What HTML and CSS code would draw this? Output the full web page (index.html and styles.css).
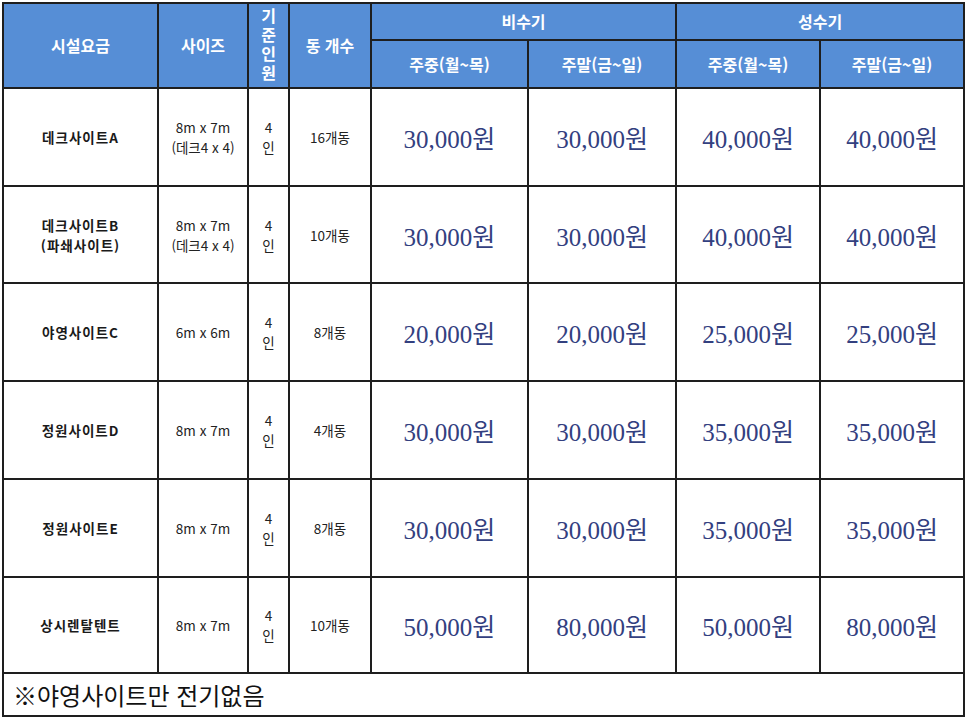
FILE: index.html
```html
<!DOCTYPE html>
<html lang="ko">
<head>
<meta charset="utf-8">
<link rel="stylesheet" href="styles.css">
</head>
<body>
<div class="wrap">
<table class="price">
  <colgroup>
    <col class="c-name"><col class="c-size"><col class="c-ppl"><col class="c-cnt">
    <col class="c-p1"><col class="c-p2"><col class="c-p3"><col class="c-p4">
  </colgroup>
  <thead>
    <tr class="h1">
      <th rowspan="2">시설요금</th>
      <th rowspan="2">사이즈</th>
      <th rowspan="2" class="vert"><span class="vtext">기준인원</span></th>
      <th rowspan="2">동 개수</th>
      <th colspan="2">비수기</th>
      <th colspan="2">성수기</th>
    </tr>
    <tr class="h2">
      <th>주중(월~목)</th>
      <th>주말(금~일)</th>
      <th>주중(월~목)</th>
      <th>주말(금~일)</th>
    </tr>
  </thead>
  <tbody>
    <tr class="r1">
      <td class="name">데크사이트A</td>
      <td class="info">8m x 7m<br>(데크4 x 4)</td>
      <td class="info">4<br>인</td>
      <td class="info">16개동</td>
      <td class="won">30,000원</td><td class="won">30,000원</td><td class="won">40,000원</td><td class="won">40,000원</td>
    </tr>
    <tr class="r2">
      <td class="name">데크사이트B<br>(파쇄사이트)</td>
      <td class="info">8m x 7m<br>(데크4 x 4)</td>
      <td class="info">4<br>인</td>
      <td class="info">10개동</td>
      <td class="won">30,000원</td><td class="won">30,000원</td><td class="won">40,000원</td><td class="won">40,000원</td>
    </tr>
    <tr class="r3">
      <td class="name">야영사이트C</td>
      <td class="info">6m x 6m</td>
      <td class="info">4<br>인</td>
      <td class="info">8개동</td>
      <td class="won">20,000원</td><td class="won">20,000원</td><td class="won">25,000원</td><td class="won">25,000원</td>
    </tr>
    <tr class="r4">
      <td class="name">정원사이트D</td>
      <td class="info">8m x 7m</td>
      <td class="info">4<br>인</td>
      <td class="info">4개동</td>
      <td class="won">30,000원</td><td class="won">30,000원</td><td class="won">35,000원</td><td class="won">35,000원</td>
    </tr>
    <tr class="r5">
      <td class="name">정원사이트E</td>
      <td class="info">8m x 7m</td>
      <td class="info">4<br>인</td>
      <td class="info">8개동</td>
      <td class="won">30,000원</td><td class="won">30,000원</td><td class="won">35,000원</td><td class="won">35,000원</td>
    </tr>
    <tr class="r6">
      <td class="name">상시렌탈텐트</td>
      <td class="info">8m x 7m</td>
      <td class="info">4<br>인</td>
      <td class="info">10개동</td>
      <td class="won">50,000원</td><td class="won">80,000원</td><td class="won">50,000원</td><td class="won">80,000원</td>
    </tr>
    <tr class="note">
      <td colspan="8">※야영사이트만 전기없음</td>
    </tr>
  </tbody>
</table>
</div>
</body>
</html>
```

FILE: styles.css
```css
html, body {
  margin: 0;
  padding: 0;
  background: #ffffff;
}
body {
  font-family: "Noto Sans CJK KR", "Noto Sans", sans-serif;
  color: #1a1a1a;
}
.wrap {
  padding: 2px 0 0 2px;
}
.price {
  border-collapse: collapse;
  table-layout: fixed;
  width: 961px;
}
.c-name { width: 155px; }
.c-size { width: 90px; }
.c-ppl { width: 41px; }
.c-cnt { width: 82px; }
.c-p1 { width: 157px; }
.c-p2 { width: 148px; }
.c-p3 { width: 144px; }
.c-p4 { width: 144px; }

.price th,
.price td {
  border: 2px solid #1e1e1e;
  text-align: center;
  vertical-align: middle;
  padding: 0;
}
.price th {
  background: #568ed6;
  color: #ffffff;
  font-size: 16px;
  font-weight: 700;
  line-height: 19px;
}
.h1 { height: 37px; }
.h2 { height: 48px; }
.vtext {
  display: inline-block;
  writing-mode: vertical-rl;
  text-orientation: upright;
  letter-spacing: 3px;
  line-height: 20px;
  font-size: 16px;
  margin-top: 4px;
}
.price tbody tr.r1 { height: 98px; }
.price tbody tr.r2 { height: 97px; }
.price tbody tr.r3 { height: 98px; }
.price tbody tr.r4 { height: 98px; }
.price tbody tr.r5 { height: 98px; }
.price tbody tr.r6 { height: 96px; }
.name {
  font-size: 13.5px;
  font-weight: 700;
  line-height: 20px;
  letter-spacing: 1px;
}
.info {
  font-size: 13.5px;
  line-height: 20px;
  font-weight: 400;
  color: #222;
}
.won {
  font-family: "Liberation Serif", "Noto Sans CJK KR", serif;
  font-size: 25px;
  color: #33407f;
}
.price tbody tr.note {
  height: 43px;
}
.note td {
  text-align: left;
  padding-left: 9px;
  font-size: 24px;
  color: #111;
}
```
